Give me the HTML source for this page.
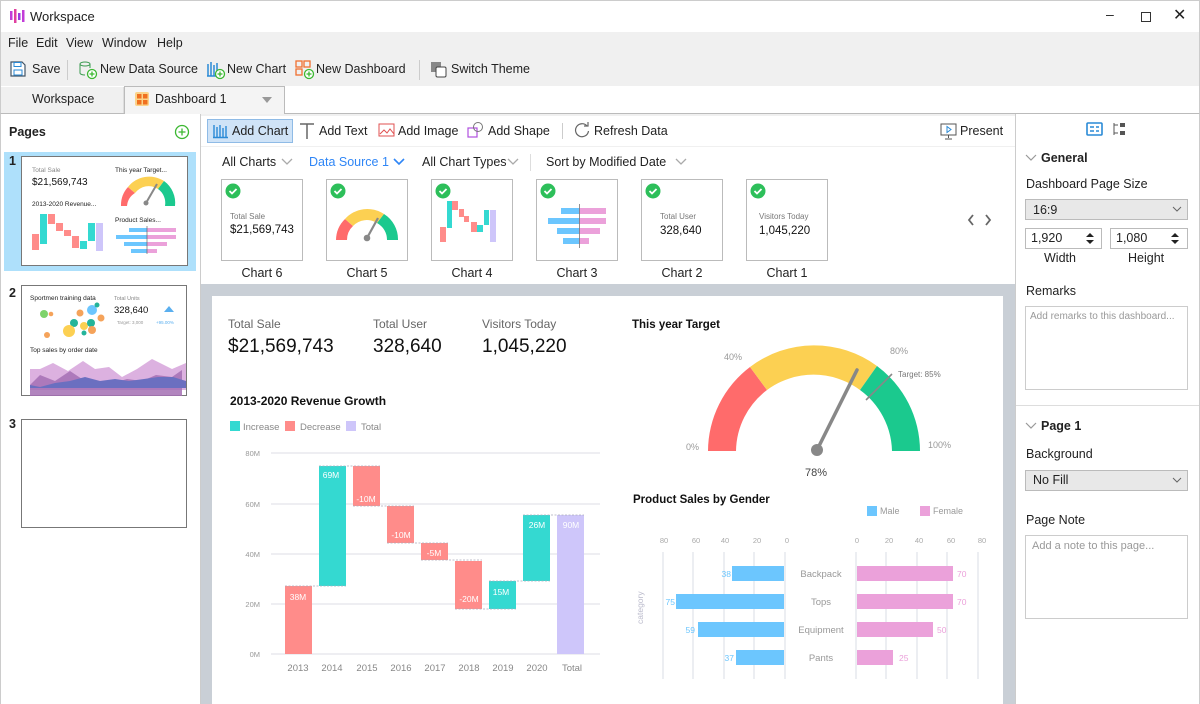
<!DOCTYPE html>
<html><head><meta charset="utf-8">
<style>
*{margin:0;padding:0;box-sizing:border-box}
body{width:1200px;height:704px;overflow:hidden;position:relative;font-family:"Liberation Sans",sans-serif;font-size:12.5px;color:#222;background:#fff}
.a{position:absolute;white-space:nowrap}
.t{position:absolute;white-space:nowrap;line-height:1}
</style></head><body>
<!-- title bar -->
<div class="a" style="left:0;top:0;width:1200px;height:32px;background:#fff;border:1px solid #ccc;border-bottom:none"></div>
<svg class="a" style="left:9px;top:8px" width="16" height="16"><rect x="1" y="3" width="2.5" height="9" fill="#c23cd8"/><rect x="5" y="1" width="2.5" height="14" fill="#e040a0"/><rect x="9" y="5" width="2.5" height="7" fill="#9b3ce0"/><rect x="13" y="2" width="2.5" height="12" fill="#c23cd8"/></svg>
<div class="t" style="left:30px;top:10px;font-size:13px">Workspace</div>
<div class="t" style="left:1106px;top:7px;font-size:14px">–</div>
<div class="a" style="left:1141px;top:12px;width:10px;height:10px;border:1.3px solid #333"></div>
<div class="t" style="left:1173px;top:8px;font-size:16px">✕</div>
<!-- menu + toolbar -->
<div class="a" style="left:0;top:32px;width:1200px;height:54px;background:#f0f0f0;border-left:1px solid #ccc;border-right:1px solid #ccc"></div>
<div class="t" style="left:8px;top:37px">File</div>
<div class="t" style="left:36px;top:37px">Edit</div>
<div class="t" style="left:66px;top:37px">View</div>
<div class="t" style="left:102px;top:37px">Window</div>
<div class="t" style="left:157px;top:37px">Help</div>
<svg class="a" style="left:9px;top:60px" width="18" height="18"><path d="M2 2h11l3 3v11H2z" fill="#fff" stroke="#456" stroke-width="1.2"/><rect x="5" y="2.5" width="7" height="4" fill="none" stroke="#2a8ad6"/><rect x="5" y="10" width="8" height="5" fill="none" stroke="#2a8ad6"/></svg>
<div class="t" style="left:32px;top:63px">Save</div>
<div class="a" style="left:67px;top:60px;width:1px;height:20px;background:#ccc"></div>
<svg class="a" style="left:78px;top:60px" width="20" height="20"><ellipse cx="7" cy="4" rx="5" ry="2" fill="none" stroke="#3a9a50"/><path d="M2 4v9c0 1 2 2 5 2M12 4v4" fill="none" stroke="#3a9a50"/><circle cx="14" cy="14" r="4.5" fill="#fff" stroke="#3cb832" stroke-width="1.3"/><path d="M14 11.5v5M11.5 14h5" stroke="#3cb832" stroke-width="1.3"/></svg>
<div class="t" style="left:100px;top:63px">New Data Source</div>
<svg class="a" style="left:206px;top:60px" width="20" height="20"><path d="M2 4v12M5 2v14M8 5v11M11 3v9M1 16h10" stroke="#2a8ad6" stroke-width="1.5"/><circle cx="14" cy="14" r="4.5" fill="#fff" stroke="#3cb832" stroke-width="1.3"/><path d="M14 11.5v5M11.5 14h5" stroke="#3cb832" stroke-width="1.3"/></svg>
<div class="t" style="left:227px;top:63px">New Chart</div>
<svg class="a" style="left:295px;top:60px" width="20" height="20"><rect x="1" y="1" width="6" height="6" fill="none" stroke="#f07030" stroke-width="1.3"/><rect x="9" y="1" width="6" height="6" fill="none" stroke="#f07030" stroke-width="1.3"/><rect x="1" y="9" width="6" height="6" fill="none" stroke="#f07030" stroke-width="1.3"/><circle cx="14" cy="14" r="4.5" fill="#fff" stroke="#3cb832" stroke-width="1.3"/><path d="M14 11.5v5M11.5 14h5" stroke="#3cb832" stroke-width="1.3"/></svg>
<div class="t" style="left:316px;top:63px">New Dashboard</div>
<div class="a" style="left:419px;top:60px;width:1px;height:20px;background:#ccc"></div>
<svg class="a" style="left:430px;top:61px" width="18" height="18"><rect x="1" y="1" width="10" height="10" fill="#888"/><rect x="6" y="6" width="10" height="10" rx="1.5" fill="#fff" stroke="#444"/></svg>
<div class="t" style="left:451px;top:63px">Switch Theme</div>
<!-- tabs -->
<div class="a" style="left:0;top:86px;width:1200px;height:28px;background:#fff;border-bottom:1px solid #bbb;border-left:1px solid #ccc;border-right:1px solid #ccc"></div>
<div class="a" style="left:1px;top:87px;width:123px;height:26px;background:#f0f0f0;border-right:1px solid #ddd"></div>
<div class="t" style="left:32px;top:93px">Workspace</div>
<div class="a" style="left:124px;top:86px;width:161px;height:28px;background:#f4f4f4;border:1px solid #bbb;border-bottom:none"></div>
<svg class="a" style="left:135px;top:92px" width="14" height="14"><rect width="14" height="14" rx="2" fill="#fbd38a"/><rect x="2" y="2" width="4.5" height="4.5" fill="#f07020"/><rect x="8" y="2" width="4.5" height="4.5" fill="#f07020"/><rect x="2" y="8" width="4.5" height="4.5" fill="#f07020"/><rect x="8" y="8" width="4.5" height="4.5" fill="#f07020"/></svg>
<div class="t" style="left:155px;top:93px">Dashboard 1</div>
<svg class="a" style="left:261px;top:96px" width="12" height="8"><path d="M1 1h10L6 7z" fill="#999"/></svg>
<!-- left panel -->
<div class="a" style="left:0;top:114px;width:201px;height:590px;background:#fff;border-left:1px solid #ccc;border-right:1px solid #ccc"></div>
<div class="t" style="left:9px;top:126px;font-weight:bold">Pages</div>
<svg class="a" style="left:174px;top:124px" width="16" height="16"><circle cx="8" cy="8" r="6.5" fill="none" stroke="#3cb832" stroke-width="1.3"/><path d="M8 4.5v7M4.5 8h7" stroke="#3cb832" stroke-width="1.3"/></svg>
<div class="a" style="left:4px;top:152px;width:192px;height:119px;background:#aee0fb"></div>
<div class="t" style="left:9px;top:155px;font-weight:bold">1</div>
<div class="a" style="left:21px;top:156px;width:167px;height:110px;background:#fff;border:1px solid #777"></div>
<svg class="a" style="left:21px;top:156px" width="167" height="110">
<text x="11" y="16" font-size="6.5" fill="#888" font-family="Liberation Sans">Total Sale</text>
<text x="11" y="29" font-size="10" fill="#111" font-family="Liberation Sans">$21,569,743</text>
<text x="94" y="16" font-size="6.5" fill="#222" font-family="Liberation Sans">This year Target...</text>
<path d="M100 50A27 27 0 0 1 107 31L114 37A17 17 0 0 0 106 50z" fill="#ff6b6b"/>
<path d="M107 31A27 27 0 0 1 143 25L137 33A17 17 0 0 0 114 37z" fill="#fcd052"/>
<path d="M143 25A27 27 0 0 1 154 50H144A17 17 0 0 0 137 33z" fill="#1bc98e"/>
<path d="M125 47L136 28" stroke="#888" stroke-width="2"/><circle cx="125" cy="47" r="2.5" fill="#888"/>
<text x="11" y="50" font-size="6.5" fill="#222" font-family="Liberation Sans">2013-2020 Revenue...</text>
<rect x="11" y="78" width="7" height="16" fill="#ff8c8a"/><rect x="19" y="58" width="7" height="30" fill="#34d9d1"/><rect x="27" y="58" width="7" height="10" fill="#ff8c8a"/><rect x="35" y="67" width="7" height="8" fill="#ff8c8a"/><rect x="43" y="74" width="7" height="6" fill="#ff8c8a"/><rect x="51" y="80" width="7" height="12" fill="#ff8c8a"/><rect x="59" y="85" width="7" height="8" fill="#34d9d1"/><rect x="67" y="67" width="7" height="18" fill="#34d9d1"/><rect x="75" y="67" width="7" height="28" fill="#cec6fa"/>
<text x="94" y="66" font-size="6.5" fill="#222" font-family="Liberation Sans">Product Sales...</text>
<rect x="108" y="72" width="18" height="4" fill="#6cc6fe"/><rect x="126" y="72" width="29" height="4" fill="#eba1da"/>
<rect x="95" y="79" width="31" height="4" fill="#6cc6fe"/><rect x="126" y="79" width="29" height="4" fill="#eba1da"/>
<rect x="103" y="86" width="23" height="4" fill="#6cc6fe"/><rect x="126" y="86" width="20" height="4" fill="#eba1da"/>
<rect x="110" y="93" width="16" height="4" fill="#6cc6fe"/><rect x="126" y="93" width="10" height="4" fill="#eba1da"/>
<path d="M126 70v28" stroke="#666" stroke-width=".7"/>
</svg>
<div class="t" style="left:9px;top:287px;font-weight:bold">2</div>
<div class="a" style="left:21px;top:285px;width:166px;height:111px;background:#fff;border:1px solid #777"></div>
<svg class="a" style="left:21px;top:285px" width="166" height="111">
<text x="9" y="15" font-size="6.5" fill="#222" font-family="Liberation Sans">Sportmen training data</text>
<circle cx="23" cy="29" r="4" fill="#7ed36b"/><circle cx="30" cy="29" r="2.3" fill="#f5a35a"/><circle cx="53" cy="38" r="4" fill="#24b49a"/><circle cx="59" cy="28" r="3.5" fill="#f5a35a"/><circle cx="71" cy="25" r="5" fill="#6cc6fe"/><circle cx="76" cy="20" r="2.5" fill="#24b49a"/><circle cx="48" cy="46" r="6" fill="#fcd052"/><circle cx="63" cy="41" r="4" fill="#fcd052"/><circle cx="70" cy="38" r="4" fill="#24b49a"/><circle cx="71" cy="45" r="4" fill="#f5a35a"/><circle cx="80" cy="33" r="3.5" fill="#f5a35a"/><circle cx="26" cy="50" r="3" fill="#f5a35a"/><circle cx="63" cy="48" r="2.5" fill="#24b49a"/>
<text x="93" y="15" font-size="5.5" fill="#888" font-family="Liberation Sans">Total Units</text>
<text x="93" y="28" font-size="9.5" fill="#111" font-family="Liberation Sans">328,640</text>
<path d="M143 27l5-6 5 6z" fill="#5aafef"/>
<text x="96" y="39" font-size="4.5" fill="#999" font-family="Liberation Sans">Target: 3,000</text><text x="135" y="39" font-size="4.5" fill="#5aafef" font-family="Liberation Sans">+95.00%</text>
<text x="9" y="67" font-size="6.5" fill="#222" font-family="Liberation Sans">Top sales by order date</text>
<path d="M9 84l10 0 13-6 15 8 15-10 12 8 14-2 13 10 15-8 15-10 20 10 14-6v27H9z" fill="#dcb1e0"/>
<path d="M9 100l10-10 15 6 15-10 15 10 14 4 14-2 14-4 15 2 14-6 16 2 10-7v26H9z" fill="#a470b4" opacity=".85"/>
<path d="M9 100l10 2 15-4 15-2 15-4 15 4 15-2 14 2 15-2 14-2 15 0 13 4v7H9z" fill="#6b6fc0"/>
</svg>
<div class="t" style="left:9px;top:418px;font-weight:bold">3</div>
<div class="a" style="left:21px;top:419px;width:166px;height:109px;background:#fff;border:1px solid #777"></div>
<!-- center toolbar -->
<div class="a" style="left:201px;top:114px;width:814px;height:590px;background:#f0f0f0"></div>
<div class="a" style="left:201px;top:116px;width:814px;height:30px;background:#fff"></div>
<div class="a" style="left:207px;top:119px;width:86px;height:24px;background:#cfe3f7;border:1px solid #8fbbe6"></div>
<svg class="a" style="left:212px;top:123px" width="16" height="16"><path d="M2 2v12M5 4v10M8 2v12M11 5v9M14 3v11M1 14.5h15" stroke="#2a8ad6" stroke-width="1.4"/></svg>
<div class="t" style="left:232px;top:125px">Add Chart</div>
<svg class="a" style="left:299px;top:122px" width="16" height="18"><path d="M1 2h14M8 2v15" stroke="#666" stroke-width="1.5"/></svg>
<div class="t" style="left:319px;top:125px">Add Text</div>
<svg class="a" style="left:378px;top:123px" width="17" height="15"><rect x="1" y="1" width="15" height="12" fill="none" stroke="#e05050"/><path d="M2 11l4-4 3 3 3-4 4 5" fill="none" stroke="#e05050"/></svg>
<div class="t" style="left:398px;top:125px">Add Image</div>
<svg class="a" style="left:467px;top:121px" width="18" height="18"><rect x="1" y="7" width="9" height="9" fill="none" stroke="#b050e0" stroke-width="1.2"/><circle cx="11" cy="6" r="4.5" fill="none" stroke="#777"/></svg>
<div class="t" style="left:488px;top:125px">Add Shape</div>
<div class="a" style="left:562px;top:123px;width:1px;height:16px;background:#ccc"></div>
<svg class="a" style="left:574px;top:122px" width="16" height="16"><path d="M13 4A6.5 6.5 0 1 0 14.5 9" fill="none" stroke="#666" stroke-width="1.2"/><path d="M10 4h4V0" fill="none" stroke="#666" stroke-width="1.2"/></svg>
<div class="t" style="left:594px;top:125px">Refresh Data</div>
<svg class="a" style="left:940px;top:123px" width="17" height="17"><rect x="1" y="1" width="15" height="11" fill="none" stroke="#555"/><path d="M8.5 12v3M5 16h7" stroke="#555"/><path d="M7 3.5v6l4-3z" fill="none" stroke="#2a8ad6"/></svg>
<div class="t" style="left:960px;top:125px">Present</div>
<!-- filters -->
<div class="a" style="left:201px;top:147px;width:814px;height:137px;background:#fff"></div>
<div class="t" style="left:222px;top:156px">All Charts</div>
<div class="t" style="left:309px;top:156px;color:#2f86f6">Data Source 1</div>
<div class="t" style="left:422px;top:156px">All Chart Types</div>
<div class="a" style="left:530px;top:154px;width:1px;height:17px;background:#ddd"></div>
<div class="t" style="left:546px;top:156px">Sort by Modified Date</div>
<svg class="a" style="left:281px;top:158px" width="12" height="8"><path d="M1 1l5 5 5-5" fill="none" stroke="#aaa" stroke-width="1.3"/></svg>
<svg class="a" style="left:393px;top:158px" width="12" height="8"><path d="M1 1l5 5 5-5" fill="none" stroke="#2f86f6" stroke-width="1.6"/></svg>
<svg class="a" style="left:507px;top:158px" width="12" height="8"><path d="M1 1l5 5 5-5" fill="none" stroke="#aaa" stroke-width="1.3"/></svg>
<svg class="a" style="left:675px;top:158px" width="12" height="8"><path d="M1 1l5 5 5-5" fill="none" stroke="#aaa" stroke-width="1.3"/></svg>
<!-- chart thumbs -->
<svg class="a" style="left:201px;top:176px" width="814" height="110" font-family="Liberation Sans">
<defs><g id="ck"><circle cx="0" cy="0" r="7.5" fill="#2dbf5a"/><path d="M-3.5 0l2.5 2.5 4.5-4.5" fill="none" stroke="#fff" stroke-width="1.8"/></g></defs>
<g fill="#fff" stroke="#bbb"><rect x="20.5" y="3.5" width="81" height="81"/><rect x="125.5" y="3.5" width="81" height="81"/><rect x="230.5" y="3.5" width="81" height="81"/><rect x="335.5" y="3.5" width="81" height="81"/><rect x="440.5" y="3.5" width="81" height="81"/><rect x="545.5" y="3.5" width="81" height="81"/></g>
<use href="#ck" x="32" y="15"/><use href="#ck" x="137" y="15"/><use href="#ck" x="242" y="15"/><use href="#ck" x="347" y="15"/><use href="#ck" x="452" y="15"/><use href="#ck" x="557" y="15"/>
<text x="29" y="43" font-size="8" fill="#777">Total Sale</text><text x="29" y="57" font-size="11.5" fill="#111">$21,569,743</text>
<path d="M135 64A30 30 0 0 1 144 43L152 50A19 19 0 0 0 146 64z" fill="#ff6b6b"/>
<path d="M144 43A30 30 0 0 1 183 38L176 47A19 19 0 0 0 152 50z" fill="#fcd052"/>
<path d="M183 38A30 30 0 0 1 197 64H186A19 19 0 0 0 176 47z" fill="#1bc98e"/>
<path d="M166 62L177 42" stroke="#888" stroke-width="2.2"/><circle cx="166" cy="62" r="3.3" fill="#888"/>
<rect x="239" y="51" width="6" height="15" fill="#ff8c8a"/><rect x="246" y="25" width="5" height="27" fill="#34d9d1"/><rect x="251" y="25" width="6" height="9" fill="#ff8c8a"/><rect x="258" y="33" width="5" height="8" fill="#ff8c8a"/><rect x="263" y="40" width="5" height="6" fill="#ff8c8a"/><rect x="270" y="46" width="6" height="10" fill="#ff8c8a"/><rect x="276" y="49" width="6" height="7" fill="#34d9d1"/><rect x="283" y="34" width="5" height="15" fill="#34d9d1"/><rect x="289" y="34" width="6" height="32" fill="#cec6fa"/>
<rect x="360" y="32" width="18" height="6" fill="#6cc6fe"/><rect x="378" y="32" width="27" height="6" fill="#eba1da"/>
<rect x="347" y="42" width="31" height="6" fill="#6cc6fe"/><rect x="378" y="42" width="27" height="6" fill="#eba1da"/>
<rect x="356" y="52" width="22" height="6" fill="#6cc6fe"/><rect x="378" y="52" width="21" height="6" fill="#eba1da"/>
<rect x="362" y="62" width="16" height="6" fill="#6cc6fe"/><rect x="378" y="62" width="10" height="6" fill="#eba1da"/>
<path d="M378.5 28v44" stroke="#777" stroke-width=".8"/>
<text x="459" y="43" font-size="8" fill="#777">Total User</text><text x="459" y="58" font-size="11.5" fill="#111">328,640</text>
<text x="558" y="43" font-size="8" fill="#777">Visitors Today</text><text x="558" y="58" font-size="11.5" fill="#111">1,045,220</text>
<g font-size="12.5" fill="#222" text-anchor="middle"><text x="61" y="101">Chart 6</text><text x="166" y="101">Chart 5</text><text x="271" y="101">Chart 4</text><text x="376" y="101">Chart 3</text><text x="481" y="101">Chart 2</text><text x="586" y="101">Chart 1</text></g>
<path d="M772 39l-4 5 4 5M785 39l4 5-4 5" fill="none" stroke="#666" stroke-width="1.8"/>
</svg>
<!-- canvas -->
<div class="a" style="left:201px;top:284px;width:814px;height:420px;background:#c9cfd6"></div>
<div class="a" style="left:212px;top:296px;width:791px;height:408px;background:#fff"></div>
<div class="t" style="left:228px;top:318px;font-size:12px;color:#666">Total Sale</div>
<div class="t" style="left:228px;top:337px;font-size:19px;color:#111">$21,569,743</div>
<div class="t" style="left:373px;top:318px;font-size:12px;color:#666">Total User</div>
<div class="t" style="left:373px;top:337px;font-size:19px;color:#111">328,640</div>
<div class="t" style="left:482px;top:318px;font-size:12px;color:#666">Visitors Today</div>
<div class="t" style="left:482px;top:337px;font-size:19px;color:#111">1,045,220</div>
<svg class="a" style="left:212px;top:296px" width="791" height="408" font-family="Liberation Sans">
<g transform="translate(-212,-296)">
<text x="230" y="405" font-size="12" font-weight="bold" fill="#111">2013-2020 Revenue Growth</text>
<rect x="230" y="421" width="10" height="10" fill="#34d9d1"/><text x="243" y="430" font-size="9.5" fill="#888">Increase</text>
<rect x="285" y="421" width="10" height="10" fill="#ff8c8a"/><text x="300" y="430" font-size="9.5" fill="#888">Decrease</text>
<rect x="346" y="421" width="10" height="10" fill="#cec6fa"/><text x="361" y="430" font-size="9.5" fill="#888">Total</text>
<g stroke="#e8e8ee" stroke-width="1.5"><path d="M271 453H600M271 504H600M271 554H600M271 604H600M271 654H600"/></g>
<g font-size="7.5" fill="#999" text-anchor="end"><text x="260" y="456">80M</text><text x="260" y="507">60M</text><text x="260" y="557">40M</text><text x="260" y="607">20M</text><text x="260" y="657">0M</text></g>
<rect x="285" y="586" width="27" height="68" fill="#ff8c8a"/>
<rect x="319" y="466" width="27" height="120" fill="#34d9d1"/>
<rect x="353" y="466" width="27" height="40" fill="#ff8c8a"/>
<rect x="387" y="506" width="27" height="37" fill="#ff8c8a"/>
<rect x="421" y="543" width="27" height="17" fill="#ff8c8a"/>
<rect x="455" y="561" width="27" height="48" fill="#ff8c8a"/>
<rect x="489" y="581" width="27" height="28" fill="#34d9d1"/>
<rect x="523" y="515" width="27" height="66" fill="#34d9d1"/>
<rect x="557" y="515" width="27" height="139" fill="#cec6fa"/>
<g stroke="#aab" stroke-dasharray="2 1.5" stroke-width=".8"><path d="M285 586H346M319 466H380M353 506H414M387 543H448M421 560H482M455 609H516M489 581H550M523 515H584"/></g>
<g font-size="8.5" fill="#fff" text-anchor="middle"><text x="298" y="600">38M</text><text x="331" y="478">69M</text><text x="366" y="502">-10M</text><text x="401" y="538">-10M</text><text x="434" y="556">-5M</text><text x="469" y="602">-20M</text><text x="501" y="595">15M</text><text x="537" y="528">26M</text><text x="571" y="528">90M</text></g>
<g font-size="9.5" fill="#888" text-anchor="middle"><text x="298" y="671">2013</text><text x="332" y="671">2014</text><text x="367" y="671">2015</text><text x="401" y="671">2016</text><text x="435" y="671">2017</text><text x="469" y="671">2018</text><text x="503" y="671">2019</text><text x="537" y="671">2020</text><text x="572" y="671">Total</text></g>
<text x="632" y="328" font-size="11.5" font-weight="bold" fill="#111">This year Target</text>
<path d="M708 451A106 106 0 0 1 750 367L767 390A78 78 0 0 0 736 451z" fill="#ff6b6b"/>
<path d="M750 367A106 106 0 0 1 877 366L860 390A78 78 0 0 0 767 390z" fill="#fcd052"/>
<path d="M877 366A106 106 0 0 1 920 451H892A78 78 0 0 0 860 390z" fill="#1bc98e"/>
<path d="M866 400L892 374" stroke="#888" stroke-width="1.6"/>
<path d="M817 450L857 370" stroke="#888" stroke-width="3.5" stroke-linecap="round"/><circle cx="817" cy="450" r="6" fill="#888"/>
<g font-size="9" fill="#999"><text x="686" y="450">0%</text><text x="724" y="360">40%</text><text x="890" y="354">80%</text><text x="928" y="448">100%</text><text x="898" y="377" font-size="8" fill="#777">Target: 85%</text></g>
<text x="816" y="476" font-size="11" fill="#444" text-anchor="middle">78%</text>
<text x="633" y="503" font-size="11.5" font-weight="bold" fill="#111">Product Sales by Gender</text>
<rect x="867" y="506" width="10" height="10" fill="#6cc6fe"/><text x="880" y="514" font-size="9" fill="#999">Male</text>
<rect x="920" y="506" width="10" height="10" fill="#eba1da"/><text x="933" y="514" font-size="9" fill="#999">Female</text>
<g font-size="7.5" fill="#aaa" text-anchor="middle"><text x="664" y="543">80</text><text x="696" y="543">60</text><text x="725" y="543">40</text><text x="757" y="543">20</text><text x="787" y="543">0</text><text x="857" y="543">0</text><text x="889" y="543">20</text><text x="919" y="543">40</text><text x="951" y="543">60</text><text x="982" y="543">80</text></g>
<g stroke="#e6e8ee" stroke-width="1.5"><path d="M663 552V679M693 552V679M724 552V679M754 552V679M785 552V679M856 552V679M886 552V679M917 552V679M947 552V679M978 552V679"/></g>
<rect x="732" y="566" width="52" height="15" fill="#6cc6fe"/><rect x="676" y="594" width="108" height="15" fill="#6cc6fe"/><rect x="698" y="622" width="86" height="15" fill="#6cc6fe"/><rect x="736" y="650" width="48" height="15" fill="#6cc6fe"/>
<rect x="857" y="566" width="96" height="15" fill="#eba1da"/><rect x="857" y="594" width="96" height="15" fill="#eba1da"/><rect x="857" y="622" width="76" height="15" fill="#eba1da"/><rect x="857" y="650" width="36" height="15" fill="#eba1da"/>
<g font-size="8.5" fill="#6cc6fe" text-anchor="end"><text x="731" y="577">38</text><text x="675" y="605">75</text><text x="695" y="633">59</text><text x="734" y="661">37</text></g>
<g font-size="8.5" fill="#eba1da"><text x="957" y="577">70</text><text x="957" y="605">70</text><text x="937" y="633">50</text><text x="899" y="661">25</text></g>
<g font-size="9.5" fill="#999" text-anchor="middle"><text x="821" y="577">Backpack</text><text x="821" y="605">Tops</text><text x="821" y="633">Equipment</text><text x="821" y="661">Pants</text></g>
<text x="0" y="0" font-size="8.5" fill="#bbc" transform="translate(643,624) rotate(-90)">category</text>
</g></svg>
<!-- right panel -->
<div class="a" style="left:1015px;top:114px;width:185px;height:590px;background:#fff;border-left:1px solid #ccc;border-right:1px solid #ccc"></div>
<svg class="a" style="left:1086px;top:122px" width="18" height="14"><rect x="1" y="1" width="15" height="12" rx="1" fill="#fff" stroke="#2a8ad6" stroke-width="1.6"/><path d="M4 5h4M10 5h3M4 9h4M10 9h3" stroke="#2a8ad6" stroke-width="1.4"/></svg>
<svg class="a" style="left:1112px;top:122px" width="16" height="14"><path d="M2 1v12M2 3h4M2 11h4" fill="none" stroke="#555"/><rect x="8" y="1" width="5" height="4" fill="#555"/><rect x="8" y="9" width="5" height="4" fill="#555"/></svg>
<svg class="a" style="left:1025px;top:154px" width="12" height="8"><path d="M1 1l5 5 5-5" fill="none" stroke="#999" stroke-width="1.2"/></svg>
<div class="t" style="left:1041px;top:152px;font-weight:bold">General</div>
<div class="t" style="left:1026px;top:178px">Dashboard Page Size</div>
<div class="a" style="left:1025px;top:199px;width:163px;height:21px;background:#e8e8e8;border:1px solid #bbb"></div>
<div class="t" style="left:1033px;top:204px">16:9</div>
<svg class="a" style="left:1172px;top:206px" width="10" height="7"><path d="M1 1l4 4 4-4" fill="none" stroke="#666"/></svg>
<div class="a" style="left:1025px;top:228px;width:77px;height:21px;border:1px solid #bbb"></div>
<div class="t" style="left:1031px;top:232px">1,920</div>
<svg class="a" style="left:1085px;top:232px" width="10" height="13"><path d="M1 5l4-4 4 4zM1 8l4 4 4-4z" fill="#222"/></svg>
<div class="a" style="left:1110px;top:228px;width:78px;height:21px;border:1px solid #bbb"></div>
<div class="t" style="left:1116px;top:232px">1,080</div>
<svg class="a" style="left:1170px;top:232px" width="10" height="13"><path d="M1 5l4-4 4 4zM1 8l4 4 4-4z" fill="#222"/></svg>
<div class="t" style="left:1044px;top:252px">Width</div>
<div class="t" style="left:1128px;top:252px">Height</div>
<div class="t" style="left:1026px;top:285px">Remarks</div>
<div class="a" style="left:1025px;top:306px;width:163px;height:84px;border:1px solid #ccc"></div>
<div class="t" style="left:1030px;top:312px;font-size:10px;color:#999">Add remarks to this dashboard...</div>
<div class="a" style="left:1016px;top:405px;width:183px;height:1px;background:#ddd"></div>
<svg class="a" style="left:1025px;top:422px" width="12" height="8"><path d="M1 1l5 5 5-5" fill="none" stroke="#999" stroke-width="1.2"/></svg>
<div class="t" style="left:1041px;top:420px;font-weight:bold">Page 1</div>
<div class="t" style="left:1026px;top:448px">Background</div>
<div class="a" style="left:1025px;top:470px;width:163px;height:21px;background:#e8e8e8;border:1px solid #bbb"></div>
<div class="t" style="left:1033px;top:474px">No Fill</div>
<svg class="a" style="left:1172px;top:477px" width="10" height="7"><path d="M1 1l4 4 4-4" fill="none" stroke="#666"/></svg>
<div class="t" style="left:1026px;top:514px">Page Note</div>
<div class="a" style="left:1025px;top:535px;width:163px;height:84px;border:1px solid #ccc"></div>
<div class="t" style="left:1032px;top:541px;font-size:11px;color:#999">Add a note to this page...</div>
</body></html>
